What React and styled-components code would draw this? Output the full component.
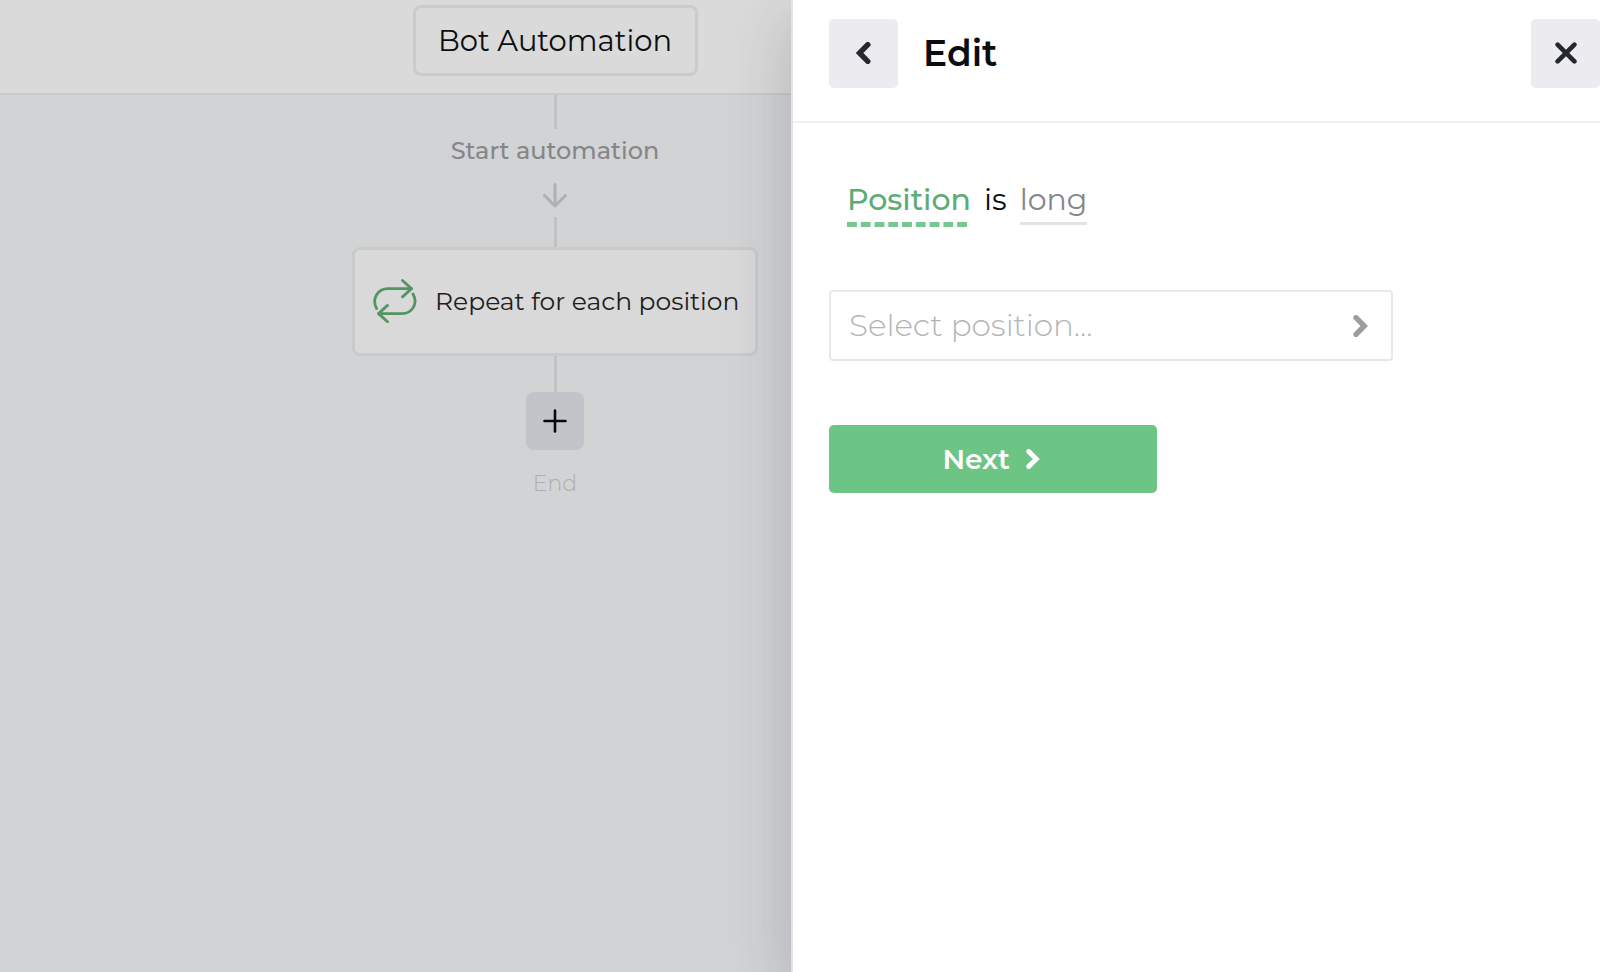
import React from 'react';
import styled, { createGlobalStyle } from 'styled-components';

const GlobalStyle = createGlobalStyle`
  * { box-sizing: border-box; }
  body {
    margin: 0;
    font-family: Montserrat, Inter, 'Liberation Sans', sans-serif;
    color: #0c0d0f;
    background: #d2d3d5;
  }
  button, select { font: inherit; color: inherit; margin: 0; cursor: pointer; }
  svg { flex: none; }
`;

const Page = styled.div`
  display: grid;
  grid-template-columns: minmax(0, 791fr) minmax(0, 809fr);
  min-height: 100vh;
  overflow: hidden;
`;

const Workspace = styled.main`
  display: flex;
  flex-direction: column;
  background: #d2d3d5;
`;

const TopBar = styled.header`
  padding: 5px 33px 17px 0;
  background: #dadada;
  border-bottom: 2px solid #c9cacb;
`;

const Column = styled.div`
  display: flex;
  flex-direction: column;
  align-items: center;
  width: 406px;
  margin-left: auto;
`;

const Flow = styled.section`
  padding-right: 33px;
`;

const TitleBox = styled.h1`
  display: flex;
  align-items: center;
  justify-content: center;
  width: 285px;
  height: 71px;
  margin: 0;
  border: 3px solid #cbcbcb;
  border-radius: 8px;
  font-size: 29px;
  font-weight: 400;
  line-height: 40px;
`;

const Connector = styled.div`
  width: 3px;
  height: ${(p) => p.$length}px;
  background: #c1c2c4;
`;

const StepLabel = styled.p`
  margin: 0;
  padding: ${(p) => (p.$faint ? '18px 0' : '6px 0 16px')};
  color: ${(p) => (p.$faint ? '#adaeb1' : '#85868a')};
  font-size: ${(p) => (p.$faint ? 22 : 24)}px;
  font-weight: ${(p) => (p.$faint ? 300 : 500)};
  line-height: 32px;
`;

const DownArrow = styled.svg`
  display: block;
  margin-bottom: 9px;
`;

const StepCard = styled.button`
  display: flex;
  align-items: center;
  gap: 18px;
  width: 100%;
  height: 109px;
  padding: 0 18px 2px;
  border: 3px solid #c9cacb;
  border-radius: 8px;
  background: #d9d9d9;
  color: #1d1e20;
  font-size: 25px;
  font-weight: 400;
  white-space: nowrap;
`;

const AddButton = styled.button`
  display: grid;
  place-items: center;
  width: 58px;
  height: 58px;
  padding: 0;
  border: 0;
  border-radius: 8px;
  background: #c3c4ca;
`;

const Panel = styled.aside`
  position: relative;
  background: #fff;
  border-left: 2px solid #e3e3e5;
  box-shadow: 0 20px 60px rgba(40, 40, 52, 0.22);
`;

const PanelHeader = styled.header`
  display: flex;
  align-items: center;
  gap: 25px;
  height: 123px;
  padding: 0 0 15px 36px;
  border-bottom: 2px solid #f0f0f1;
`;

const PanelTitle = styled.h2`
  flex: 1;
  margin: 0;
  font-size: 36px;
  font-weight: 600;
  line-height: 44px;
`;

const SquareButton = styled.button`
  display: grid;
  place-items: center;
  width: 69px;
  height: 69px;
  padding: 0;
  border: 0;
  border-radius: 5px;
  background: #ebebf0;
  color: #25282e;
`;

const PanelBody = styled.form`
  display: flex;
  flex-direction: column;
  align-items: flex-start;
  padding: 57px 36px;
`;

const Condition = styled.div`
  display: flex;
  align-items: flex-start;
  gap: 13px;
  padding-left: 18px;
  font-size: 30px;
  line-height: 40px;
`;

const Word = styled.span`
  font-weight: 400;
`;

const Token = styled.button`
  padding: 0 0 7px;
  border: 0;
  font-weight: ${(p) => (p.$active ? 500 : 400)};
  color: ${(p) => (p.$active ? '#5cac75' : '#85868a')};
  background: ${(p) =>
    p.$active
      ? 'linear-gradient(90deg, #78c690 10px, transparent 10px) left bottom / 14px 5px round no-repeat'
      : 'linear-gradient(#e3e3e5, #e3e3e5) left 0 bottom 2px / 100% 3px no-repeat'};
`;

const SelectField = styled.div`
  display: grid;
  align-items: center;
  width: 100%;
  max-width: 564px;
  margin-top: 63px;

  > * { grid-area: 1 / 1; }
  > svg { justify-self: end; margin-right: 25px; pointer-events: none; }
`;

const Select = styled.select`
  width: 100%;
  height: 71px;
  padding: 0 60px 2px 18px;
  appearance: none;
  border: 2px solid #e8e8e8;
  border-radius: 4px;
  background: #fff;
  color: #b4b4b6;
  font-size: 31px;
  font-weight: 300;
`;

const NextButton = styled.button`
  display: flex;
  align-items: center;
  justify-content: center;
  gap: 16px;
  width: 328px;
  height: 68px;
  margin-top: 64px;
  padding: 0 4px 0 0;
  border: 0;
  border-radius: 5px;
  background: #6cc485;
  color: #fff;
  font-size: 28px;
  font-weight: 600;
`;

const Chevron = ({ left, size = 22, color = 'currentColor' }) => (
  <svg width={(size * 15) / 22} height={size} viewBox="0 0 15 22" fill="none" stroke={color} strokeWidth="5.4" aria-hidden="true">
    <path d={left ? 'M11.800 2.700 3.500 11l8.300 8.300' : 'M3 2.700 11.300 11 3 19.300'} strokeLinecap="round" />
  </svg>
);

const Cross = () => (
  <svg width="22" height="22" viewBox="0 0 22 22" fill="none" stroke="currentColor" strokeWidth="4.6" strokeLinecap="round" aria-hidden="true">
    <path d="m2.600 2.600 16.800 16.800M19.400 2.600 2.600 19.400" />
  </svg>
);

const RepeatIcon = () => (
  <svg width="44" height="44" viewBox="0 0 44 44" fill="none" stroke="#529563" strokeWidth="2.8" strokeLinecap="round" strokeLinejoin="round" aria-hidden="true">
    <path d="M3.600 29.500C-1.500 20 4.500 9.700 15 9.700H38.500" />
    <path d="m29.500 1.500 9 8.200-9 8.200" />
    <path d="M40 15c5.500 9.500-1 19.600-11 19.600H6" />
    <path d="M14.500 26.400 5.500 34.600l9 8.200" />
  </svg>
);

export default function App() {
  return (
    <>
      <GlobalStyle />
      <Page>
        <Workspace>
          <TopBar>
            <Column>
              <TitleBox>Bot Automation</TitleBox>
            </Column>
          </TopBar>
          <Flow>
            <Column>
              <Connector $length={34} />
              <StepLabel>Start automation</StepLabel>
              <DownArrow width="24" height="25" viewBox="0 0 24 25" fill="none" stroke="#aeb0b4" strokeWidth="3" strokeLinecap="round" strokeLinejoin="round" aria-hidden="true">
                <path d="M12 1.500v21.500M1.500 12.500 12 23l10.500-10.500" />
              </DownArrow>
              <Connector $length={30} />
              <StepCard type="button">
                <RepeatIcon />
                Repeat for each position
              </StepCard>
              <Connector $length={36} />
              <AddButton type="button" aria-label="Add step">
                <svg width="24" height="24" viewBox="0 0 24 24" stroke="#08090b" strokeWidth="2.6" strokeLinecap="round" aria-hidden="true">
                  <path d="M12 1.500v21M1.500 12h21" />
                </svg>
              </AddButton>
              <StepLabel $faint>End</StepLabel>
            </Column>
          </Flow>
        </Workspace>
        <Panel>
          <PanelHeader>
            <SquareButton type="button" aria-label="Back">
              <Chevron left />
            </SquareButton>
            <PanelTitle>Edit</PanelTitle>
            <SquareButton type="button" aria-label="Close">
              <Cross />
            </SquareButton>
          </PanelHeader>
          <PanelBody>
            <Condition>
              <Token type="button" $active>Position</Token>
              <Word>is</Word>
              <Token type="button">long</Token>
            </Condition>
            <SelectField>
              <Select aria-label="Position" defaultValue="">
                <option value="">Select position...</option>
              </Select>
              <Chevron color="#9c9c9c" />
            </SelectField>
            <NextButton type="button">
              Next
              <Chevron size={20} />
            </NextButton>
          </PanelBody>
        </Panel>
      </Page>
    </>
  );
}
